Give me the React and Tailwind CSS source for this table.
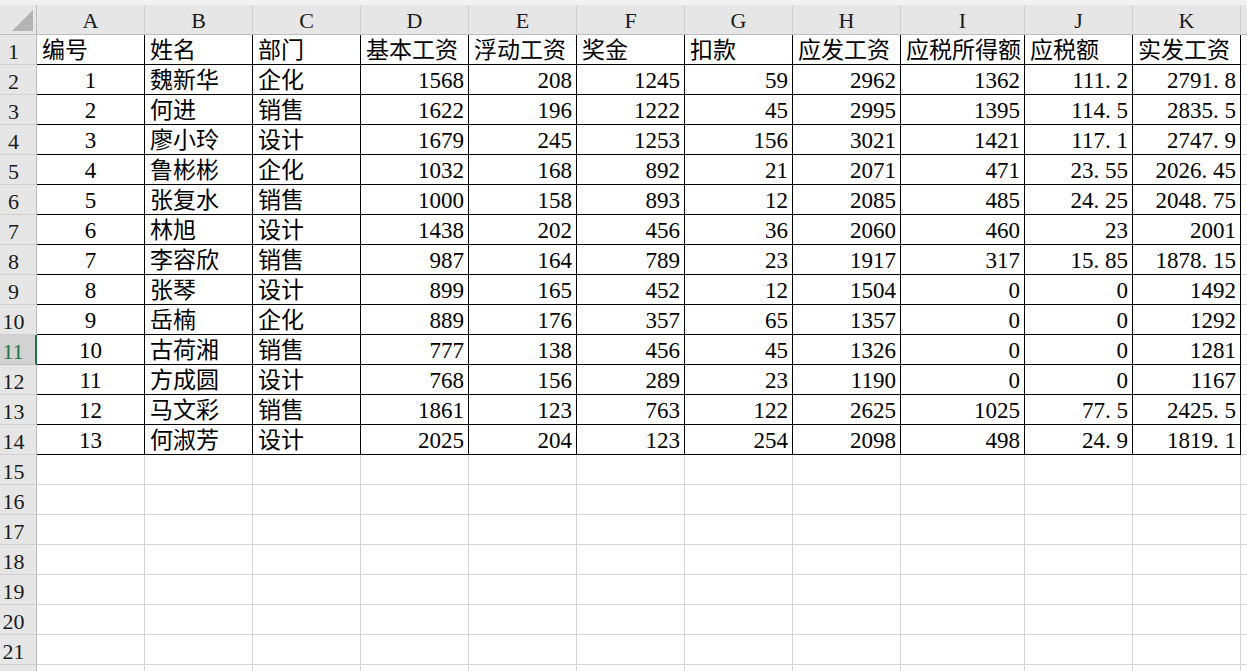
const COLS = ['A', 'B', 'C', 'D', 'E', 'F', 'G', 'H', 'I', 'J', 'K'];

const HEAD = ['编号', '姓名', '部门', '基本工资', '浮动工资', '奖金', '扣款', '应发工资', '应税所得额', '应税额', '实发工资'];

const ROWS = [
  [1, '魏新华', '企化', 1568, 208, 1245, 59, 2962, 1362, '111.2', '2791.8'],
  [2, '何进', '销售', 1622, 196, 1222, 45, 2995, 1395, '114.5', '2835.5'],
  [3, '廖小玲', '设计', 1679, 245, 1253, 156, 3021, 1421, '117.1', '2747.9'],
  [4, '鲁彬彬', '企化', 1032, 168, 892, 21, 2071, 471, '23.55', '2026.45'],
  [5, '张复水', '销售', 1000, 158, 893, 12, 2085, 485, '24.25', '2048.75'],
  [6, '林旭', '设计', 1438, 202, 456, 36, 2060, 460, '23', '2001'],
  [7, '李容欣', '销售', 987, 164, 789, 23, 1917, 317, '15.85', '1878.15'],
  [8, '张琴', '设计', 899, 165, 452, 12, 1504, 0, '0', '1492'],
  [9, '岳楠', '企化', 889, 176, 357, 65, 1357, 0, '0', '1292'],
  [10, '古荷湘', '销售', 777, 138, 456, 45, 1326, 0, '0', '1281'],
  [11, '方成圆', '设计', 768, 156, 289, 23, 1190, 0, '0', '1167'],
  [12, '马文彩', '销售', 1861, 123, 763, 122, 2625, 1025, '77.5', '2425.5'],
  [13, '何淑芳', '设计', 2025, 204, 123, 254, 2098, 498, '24.9', '1819.1'],
];

const ACTIVE_ROW = 11;
const TOTAL_ROWS = 22;
const LAST_LABEL = 21; // row 22 only peeks in at the bottom edge

function Num({ value }) {
  const s = String(value);
  if (!s.includes('.')) return s;
  const [a, b] = s.split('.');
  return (
    <>
      {a}
      <span className="inline-block w-[0.5em]">.</span>
      {b}
    </>
  );
}

function RowHeader({ n }) {
  const active = n === ACTIVE_ROW;
  return (
    <div
      className={`h-[30px] flex items-center justify-center pt-[4px] pr-[9px] text-[22px] border-b ${
        active
          ? 'bg-[#d2d2d2] text-[#217346] border-r-2 border-r-[#217346] border-b-[#bdbdbd]'
          : 'bg-[#e6e6e6] text-[#1a1a1a] border-r border-r-[#bdbdbd] border-b-[#d0d0d0]'
      }`}
    >
      {n <= LAST_LABEL ? n : ''}
    </div>
  );
}

function DataCell({ value, align }) {
  const alignCls = align === 'left' ? 'justify-start pl-[5px]' : align === 'center' ? 'justify-center' : 'justify-end pr-[4px]';
  return (
    <div className={`h-[30px] flex items-center pt-[4px] whitespace-nowrap overflow-hidden border-r border-b border-black text-[23px] text-black ${alignCls}`}>
      {align === 'right' ? <Num value={value} /> : value}
    </div>
  );
}

function EmptyCell({ last }) {
  return <div className={`h-[30px] border-b border-[#d4d4d4] ${last ? '' : 'border-r'}`} />;
}

export default function App() {
  const rowNums = Array.from({ length: TOTAL_ROWS }, (_, i) => i + 1);

  return (
    <div
      className="w-[1247px] h-[671px] overflow-hidden bg-white"
      style={{ fontFamily: '"Liberation Serif", "Noto Sans CJK SC", serif' }}
    >
      <div className="grid grid-cols-[37px_repeat(8,108px)_124px_108px_108px_1fr]">
        {/* column letters */}
        <div className="h-[35px] bg-[#f0f0f0] pt-[5px]">
          <div className="h-full bg-[#e6e6e6] border-r border-b border-[#bdbdbd] relative">
            <svg className="absolute left-[12px] top-[5px]" width="21" height="21" viewBox="0 0 21 21">
              <polygon points="21,0 21,21 0,21" fill="#b4b4b4" />
            </svg>
          </div>
        </div>
        {COLS.map(c => (
          <div key={c} className="h-[35px] bg-[#f0f0f0] pt-[5px]">
            <div className="h-full bg-[#e6e6e6] border-r border-r-[#d0d0d0] border-b border-b-[#bdbdbd] flex items-center justify-center pt-[2px] text-[22px] text-[#1a1a1a]">
              {c}
            </div>
          </div>
        ))}
        <div className="h-[35px] bg-[#f0f0f0] pt-[5px]">
          <div className="h-full bg-[#e6e6e6] border-b border-[#bdbdbd]" />
        </div>

        {rowNums.map(n => {
          let cells;
          if (n === 1) {
            cells = HEAD.map((h, i) => <DataCell key={i} value={h} align="left" />);
          } else if (n - 2 < ROWS.length) {
            const r = ROWS[n - 2];
            cells = r.map((v, i) => (
              <DataCell key={i} value={v} align={i === 0 ? 'center' : i < 3 ? 'left' : 'right'} />
            ));
          } else {
            cells = COLS.map((c, i) => <EmptyCell key={i} />);
          }
          return [
            <RowHeader key={`h${n}`} n={n} />,
            ...cells.map((cell, i) => <div key={`${n}-${i}`}>{cell}</div>),
            <EmptyCell key={`l${n}`} last />,
          ];
        })}
      </div>
    </div>
  );
}
